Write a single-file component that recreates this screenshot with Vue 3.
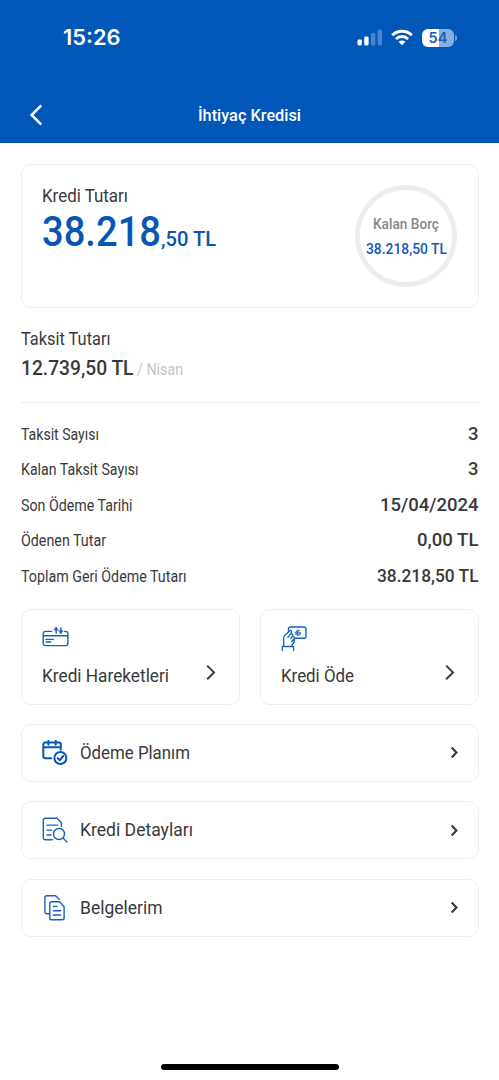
<script setup>
// Condenses a label horizontally to the given width, keeping its height.
const vFit = {
  mounted(el, { value }) {
    const natural = el.getBoundingClientRect().width
    el.style.transform = `scaleX(${value / natural})`
    el.style.marginRight = `${value - natural}px`
  },
}

const details = [
  { label: 'Taksit Sayısı', lw: 78, value: '3', vw: 10.5 },
  { label: 'Kalan Taksit Sayısı', lw: 117.5, value: '3', vw: 10.5 },
  { label: 'Son Ödeme Tarihi', lw: 111.5, value: '15/04/2024', vw: 98.5 },
  { label: 'Ödenen Tutar', lw: 85, value: '0,00 TL', vw: 61.5 },
  { label: 'Toplam Geri Ödeme Tutarı', lw: 165.5, value: '38.218,50 TL', vw: 101.5 },
]

const links = [
  { icon: 'plan', label: 'Ödeme Planım', w: 110 },
  { icon: 'detail', label: 'Kredi Detayları', w: 113 },
  { icon: 'docs', label: 'Belgelerim', w: 82.5 },
]
</script>

<template>
  <div class="screen">
    <header class="header">
      <div class="status">
        <span v-fit="57.5" class="clock">15:26</span>
        <div class="status-icons">
          <svg class="signal" width="26" height="17" viewBox="0 0 26 17" fill="#fff">
            <rect x="0.5" y="10.5" width="4.4" height="6" rx="1.4" />
            <rect x="7.2" y="7.5" width="4.4" height="9" rx="1.4" />
            <rect x="13.9" y="4" width="4.4" height="12.5" rx="1.4" opacity=".28" />
            <rect x="20.6" y="0.6" width="4.4" height="15.9" rx="1.4" opacity=".28" />
          </svg>
          <svg class="wifi" width="22" height="17" viewBox="0 0 22 17" fill="none" stroke="#fff" stroke-width="3">
            <path d="M1.2 6.2C6.7.8 15.3.8 20.8 6.2" />
            <path d="M4.9 10c3.5-3.3 8.7-3.3 12.2 0" />
            <path d="M7.6 12.8c2-1.8 4.8-1.8 6.8 0L11 16.3z" fill="#fff" stroke="none" />
          </svg>
          <div class="battery">
            <div class="battery-body">54</div>
            <i class="battery-tip"></i>
          </div>
        </div>
      </div>
      <nav class="nav">
        <svg class="back" width="14" height="22" viewBox="0 0 14 22">
          <path d="M12.3 1.4 2.6 11l9.7 9.6" fill="none" stroke="#fff" stroke-width="2.5" />
        </svg>
        <span v-fit="103" class="title">İhtiyaç Kredisi</span>
      </nav>
    </header>

    <main class="content">
      <section class="card summary">
        <div>
          <div class="line label"><span v-fit="86">Kredi Tutarı</span></div>
          <div class="amount">
            <span v-fit="119" class="whole">38.218</span>
            <span v-fit="55" class="cents">,50 TL</span>
          </div>
        </div>
        <div class="ring">
          <span v-fit="66" class="ring-label">Kalan Borç</span>
          <span v-fit="81" class="ring-value">38.218,50 TL</span>
        </div>
      </section>

      <section class="instalment">
        <div class="line label"><span v-fit="89.5">Taksit Tutarı</span></div>
        <div class="due">
          <span v-fit="112.5" class="due-value">12.739,50 TL</span>
          <span v-fit="46" class="due-month">/ Nisan</span>
        </div>
      </section>

      <dl class="details">
        <div v-for="d in details" :key="d.label" class="row">
          <dt v-fit="d.lw">{{ d.label }}</dt>
          <dd v-fit="d.vw">{{ d.value }}</dd>
        </div>
      </dl>

      <section class="tiles">
        <div class="card tile">
          <svg width="28" height="26" viewBox="0 0 28 26" class="icon">
            <path d="M9.6 5.4H3.5A2.3 2.3 0 0 0 1.2 7.7v9.6a2.3 2.3 0 0 0 2.3 2.3h20.1a2.3 2.3 0 0 0 2.3-2.3V7.7a2.3 2.3 0 0 0-2.2-2.3h-1.2M1.2 9.8h24.7M4 13.4h7.5M4 16h4.8" />
            <path d="M14.2 7V2.2M18.9 2v4.8" stroke-width="1.5" />
            <path d="m14.2 1.2 2 2.9h-4zM18.9 7.6l2-2.9h-4z" fill="#1862b8" stroke-width=".6" />
          </svg>
          <div class="tile-foot">
            <span v-fit="127">Kredi Hareketleri</span>
            <svg class="chevron" width="10" height="17" viewBox="0 0 10 17"><path d="m1.2 1.6 6.8 6.8-6.8 6.8" /></svg>
          </div>
        </div>
        <div class="card tile">
          <svg width="28" height="26" viewBox="0 0 28 26" class="icon">
            <path d="M7.5 5V2.9A1.9 1.9 0 0 1 9.4 1h13.7A1.9 1.9 0 0 1 25 2.9v7.4a1.9 1.9 0 0 1-1.9 1.9H14.6" />
            <path d="M1.3 24.5v-4h11.2v4M2.7 20.4v-8.2c0-1.5.5-2.3 1.5-3.3l4.3-4c1.4-1.1 2.8.4 1.9 1.8L7 11.4M10.2 8c1.5-.4 2.2 1 1.3 2.2L9.6 12.6M12.1 10.6c1.3-.1 1.8 1.2 1 2.2l-2.6 3M13.4 13.4c.5 2.8-1 4.5-2.4 5.5v1.5" stroke-width="1.3" />
            <path d="M16.2 3.7v5.6c2 0 3.3-.9 3.5-2.5M14.3 6.4l4-1.8M14.3 8.2l4-1.8" stroke-width="1.1" />
          </svg>
          <div class="tile-foot">
            <span v-fit="73">Kredi Öde</span>
            <svg class="chevron" width="10" height="17" viewBox="0 0 10 17"><path d="m1.2 1.6 6.8 6.8-6.8 6.8" /></svg>
          </div>
        </div>
      </section>

      <section class="links">
        <div v-for="l in links" :key="l.label" class="card link">
          <svg v-if="l.icon === 'plan'" width="28" height="26" viewBox="0 0 28 26" class="icon bold">
            <path d="M9.2 18.3H3.3a2 2 0 0 1-2-2V4.6a2 2 0 0 1 2-2h13.5a2 2 0 0 1 2 2v5.2M1.3 7.2h17.5M6.4.8v4M13.7.8v4" />
            <circle cx="18.4" cy="18" r="6" />
            <path d="m15.6 18.1 2.1 2.1 3.6-4.2" />
          </svg>
          <svg v-else-if="l.icon === 'detail'" width="28" height="26" viewBox="0 0 28 26" class="icon">
            <path d="M10.3 22.8h-7a2 2 0 0 1-2-2V3.2a2 2 0 0 1 2-2h11.8l4.3 4.6v3.8M5 8.1h10.5M5 13.1h5M5 18h4" />
            <circle cx="17" cy="17" r="5.5" />
            <path d="m21 21 4 4" />
          </svg>
          <svg v-else width="28" height="26" viewBox="0 0 28 26" class="icon">
            <path d="M6.9 18.7H4.7a1.8 1.8 0 0 1-1.8-1.8V2.6A1.8 1.8 0 0 1 4.7.8h8.8l3.7 3.5" />
            <path d="M9.6 6.7h8l4.5 5v11.2a1.8 1.8 0 0 1-1.8 1.8H9.6a1.8 1.8 0 0 1-1.8-1.8V8.5a1.8 1.8 0 0 1 1.8-1.8zM11.4 11.4h3.7M11.4 15.7h7.2M11.4 20h7.2" />
          </svg>
          <span v-fit="l.w" class="link-label">{{ l.label }}</span>
          <svg class="chevron small" width="9" height="13" viewBox="0 0 9 13"><path d="m1.7 1.5 4.7 5-4.7 5" /></svg>
        </div>
      </section>
    </main>
    <div class="home"></div>
  </div>
</template>

<style>
body { margin: 0; background: #fff; }
</style>

<style scoped>
.screen {
  box-sizing: border-box;
  width: 499px;
  height: 1080px;
  display: flex;
  flex-direction: column;
  background: #fff;
  color: #39393b;
  font-family: Roboto, "Noto Sans", sans-serif;
  overflow: hidden;
}
span, dt, dd {
  display: inline-block;
  flex: none;
  white-space: nowrap;
  transform-origin: 0 50%;
}
svg { display: block; flex: none; }

.header { height: 143px; flex: none; background: #0057b8; color: #fff; }
.status { height: 75px; display: flex; justify-content: space-between; padding: 0 42px 0 62.5px; align-items: center; }
.clock { font: 600 21px/28px Inter, sans-serif; }
.status-icons { display: flex; align-items: center; }
.wifi { margin-left: 8.5px; }
.battery { display: flex; align-items: center; margin-left: 9px; }
.battery-body {
  width: 32px;
  height: 18px;
  border-radius: 6px;
  background: linear-gradient(90deg, #fff 54%, #86afe0 54%);
  color: #1d5fb6;
  font: 600 14.5px/18px Inter, sans-serif;
  letter-spacing: .2px;
  text-align: center;
}
.battery-tip { width: 2px; height: 6px; margin-left: 1px; border-radius: 0 2px 2px 0; background: #6d9fd9; }
.nav { position: relative; height: 68px; display: flex; justify-content: center; padding-top: 28px; box-sizing: border-box; }
.back { position: absolute; left: 29px; top: 29px; }
.title { font-size: 17px; font-weight: 500; line-height: 24px; }

.content { padding: 21px 20.5px 0; }
.card { box-sizing: border-box; border: 1.5px solid #eee; border-radius: 10px; background: #fff; }
.summary { height: 144px; padding: 19px 20.5px 0 20.5px; display: flex; justify-content: space-between; }
.line { height: 24px; display: flex; line-height: 24px; }
.label { font-size: 18px; }
.amount { display: flex; align-items: baseline; height: 46px; line-height: 47px; color: #0955b3; }
.whole { font-size: 42px; font-weight: 500; }
.cents { font-size: 20.7px; font-weight: 500; }
.ring {
  box-sizing: border-box;
  width: 102px;
  height: 102px;
  margin-top: 1px;
  border: 5px solid #ededee;
  border-radius: 50%;
  display: flex;
  flex-direction: column;
  align-items: center;
  padding-top: 22px;
}
.ring-label { color: #87878a; font-size: 14.7px; font-weight: 500; line-height: 25px; }
.ring-value { color: #1259b8; font-size: 14.5px; font-weight: 500; line-height: 25px; }

.instalment { box-sizing: border-box; height: 95px; padding-top: 19px; border-bottom: 1.5px solid #ebebeb; }
.due { display: flex; align-items: baseline; height: 34px; line-height: 34px; }
.due-value { font-size: 20.2px; font-weight: 500; }
.due-month { margin-left: 4px; color: #c6c6c8; font-size: 16px; }

.details { margin: 0; padding-top: 14px; }
.row { display: flex; justify-content: space-between; height: 35.4px; line-height: 35.4px; }
dt { font-size: 16px; }
dd { margin: 0; font-size: 17.6px; font-weight: 500; }

.tiles { display: grid; grid-template-columns: 1fr 1fr; gap: 20px; margin-top: 15px; }
.tile { height: 96px; padding: 16px 23px 0 20.5px; }
.tile-foot { display: flex; justify-content: space-between; height: 24px; margin-top: 12px; font-size: 18px; line-height: 24px; }
.icon { fill: none; stroke: #1862b8; stroke-width: 1.4; stroke-linecap: round; stroke-linejoin: round; }
.bold { stroke: #0756b6; stroke-width: 2; }
.chevron { fill: none; stroke: #3a3a3c; stroke-width: 2; }
.small { stroke-width: 2.2; }

.links { display: flex; flex-direction: column; gap: 19.3px; margin-top: 19px; }
.link { height: 58px; display: flex; align-items: center; padding: 0 19px 0 20.5px; }
.link-label { margin-left: 10px; font-size: 18px; line-height: 24px; }
.link .chevron { margin-left: auto; }

.home { width: 178px; height: 6px; margin: auto auto 10.5px; border-radius: 3px; background: #000; }
</style>
